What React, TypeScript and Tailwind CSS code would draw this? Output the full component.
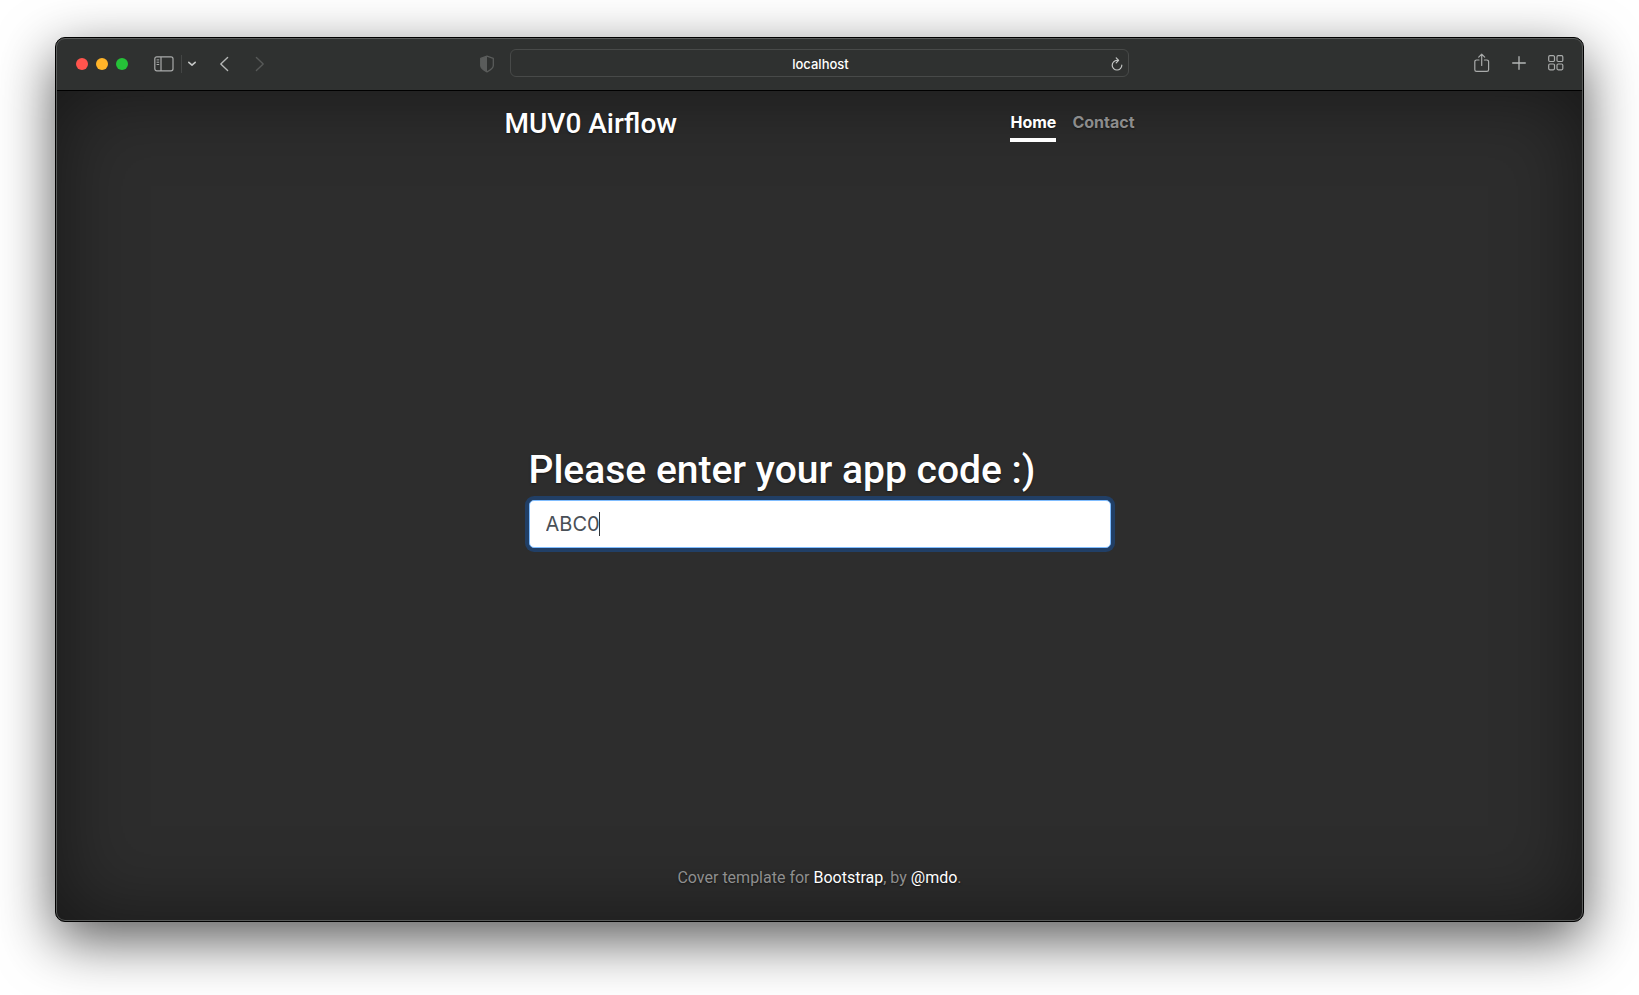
import { useState } from "react";

function SidebarIcon() {
  return (
    <svg width="20" height="16" viewBox="0 0 20 16" fill="none" stroke="#a9abaa" strokeWidth="1.2">
      <rect x="0.8" y="0.8" width="18.2" height="14" rx="2" />
      <path d="M7 1v14" />
      <path d="M2.6 3.9h2.6M2.6 6.2h2.6M2.6 8.5h2.6" strokeWidth="1" />
    </svg>
  );
}

function DownIcon() {
  return (
    <svg width="10" height="6" viewBox="0 0 10 6" fill="none" stroke="#c4c6c5" strokeWidth="1.6" strokeLinecap="round" strokeLinejoin="round">
      <path d="M1.8 1.4 5 4.2l3.2-2.8" />
    </svg>
  );
}

function BackIcon() {
  return (
    <svg width="14" height="16" viewBox="0 0 14 16" fill="none" stroke="#b4b6b5" strokeWidth="1.4" strokeLinecap="round" strokeLinejoin="round">
      <path d="M10.6 1.6 3.8 8l6.8 6.4" />
    </svg>
  );
}

function ForwardIcon() {
  return (
    <svg width="14" height="16" viewBox="0 0 14 16" fill="none" stroke="#575958" strokeWidth="1.4" strokeLinecap="round" strokeLinejoin="round">
      <path d="M3.4 1.6 10.2 8l-6.8 6.4" />
    </svg>
  );
}

function ShieldIcon() {
  return (
    <svg width="14" height="18" viewBox="0 0 14 18" fill="none">
      <path d="M7 1.2 13.3 3.4v7.2c0 2.6-2.8 4.6-6.3 6.2-3.5-1.6-6.3-3.6-6.3-6.2V3.4z" stroke="#5a5c5b" strokeWidth="1.3" strokeLinejoin="round" />
      <path d="M7 1.2V16.8C3.5 15.2.7 13.2.7 10.6V3.4z" fill="#5a5c5b" />
    </svg>
  );
}

function ReloadIcon() {
  return (
    <svg width="12" height="14" viewBox="0 0 12 14" fill="none" stroke="#c2c4c3" strokeWidth="1.2" strokeLinecap="round" strokeLinejoin="round">
      <path d="M7 3.4H6A4.8 4.8 0 1 0 10.8 8.2" />
      <path d="M5.2.9l2.4 2.5-2.4 2.4" />
    </svg>
  );
}

function ShareIcon() {
  return (
    <svg width="16" height="20" viewBox="0 0 16 20" fill="none" stroke="#a9abaa" strokeWidth="1.2" strokeLinecap="round" strokeLinejoin="round">
      <path d="M5 7H2.5A1.7 1.7 0 0 0 .8 8.7v8A1.7 1.7 0 0 0 2.5 18.4h10.4a1.7 1.7 0 0 0 1.7-1.7v-8A1.7 1.7 0 0 0 12.9 7h-2.5" />
      <path d="M7.7 12.4V1.2M4.7 4.2l3-3 3 3" />
    </svg>
  );
}

function PlusIcon() {
  return (
    <svg width="14" height="14" viewBox="0 0 14 14" stroke="#b4b6b5" strokeWidth="1.3" strokeLinecap="round">
      <path d="M7 .7v12.6M.7 7h12.6" />
    </svg>
  );
}

function GridIcon() {
  return (
    <svg width="16" height="16" viewBox="0 0 16 16" fill="none" stroke="#a9abaa" strokeWidth="1.2">
      <rect x="0.7" y="0.7" width="5.8" height="5.8" rx="1.2" />
      <rect x="9" y="0.7" width="5.8" height="5.8" rx="1.2" />
      <rect x="0.7" y="9" width="5.8" height="5.8" rx="1.2" />
      <rect x="9" y="9" width="5.8" height="5.8" rx="1.2" />
    </svg>
  );
}

function Toolbar() {
  return (
    <div className="grid h-[53px] shrink-0 grid-cols-[1fr_minmax(0,619px)_1fr] items-center border-b border-black bg-[#2f3130]">
      <div className="flex items-center pl-5">
        <div className="flex gap-2">
          <button type="button" aria-label="Close" className="size-3 rounded-full bg-[#ff544d]" />
          <button type="button" aria-label="Minimize" className="size-3 rounded-full bg-[#ffb429]" />
          <button type="button" aria-label="Zoom" className="size-3 rounded-full bg-[#25c138]" />
        </div>
        <button type="button" aria-label="Show sidebar" className="ml-[26px]"><SidebarIcon /></button>
        <div className="ml-[7px] h-[18px] w-px bg-[#444645]" />
        <button type="button" aria-label="Tab groups" className="ml-[5px]"><DownIcon /></button>
        <button type="button" aria-label="Back" className="ml-5"><BackIcon /></button>
        <button type="button" aria-label="Forward" className="ml-[22px]"><ForwardIcon /></button>
        <button type="button" aria-label="Privacy report" className="mr-4 ml-auto"><ShieldIcon /></button>
      </div>
      <div className="mb-0.5 flex h-7 items-center rounded-md border border-[#484a49] pt-0.5 pr-[5px] pl-[19px]">
        <input
          aria-label="Address"
          defaultValue="localhost"
          className="min-w-0 flex-1 bg-transparent pt-0.5 text-center text-[13px] font-medium text-white outline-none"
        />
        <button type="button" aria-label="Reload"><ReloadIcon /></button>
      </div>
      <div className="flex items-center justify-end gap-[22px] pr-[19px] pb-0.5">
        <button type="button" aria-label="Share"><ShareIcon /></button>
        <button type="button" aria-label="New tab"><PlusIcon /></button>
        <button type="button" aria-label="Tab overview"><GridIcon /></button>
      </div>
    </div>
  );
}

function CodeForm() {
  const [code, setCode] = useState("ABC0");
  return (
    <form className="mb-4" onSubmit={(e) => e.preventDefault()}>
      <h1 className="mb-1 font-['Roboto','Inter',sans-serif] text-[39px] leading-[52px] font-medium">
        <label htmlFor="code">Please enter your app code :)</label>
      </h1>
      <div className="relative">
        <input
          id="code"
          value={code}
          onChange={(e) => setCode(e.target.value)}
          className="h-12 w-full rounded-[5px] border border-[#80bdff] bg-white px-4 text-xl text-[#495057] caret-transparent ring-4 ring-[#213f66] outline-none"
        />
        <span className="pointer-events-none absolute inset-y-3 left-4 flex items-stretch text-xl leading-6">
          <span className="invisible">{code}</span>
          <span className="w-px bg-[#30353a]" />
        </span>
      </div>
    </form>
  );
}

export default function App() {
  return (
    <div className="flex min-h-screen flex-col bg-white px-[55px] pt-[37px] pb-[73px] font-['Inter','Liberation_Sans',sans-serif]">
      <div className="relative flex flex-1 flex-col overflow-hidden rounded-[10px] border border-black bg-[#2d2d2d] shadow-[0_18px_56px_rgba(0,0,0,0.65)]">
        <Toolbar />
        <div className="flex flex-1 flex-col items-center px-4 py-[15px] text-white shadow-[inset_0_0_80px_rgba(0,0,0,0.5)] [text-shadow:0_1px_2px_rgba(0,0,0,0.5)]">
          <div className="flex w-full max-w-[630px] flex-1 flex-col">
            <header className="flex items-start justify-between">
              <h3 className="font-['Roboto','Inter',sans-serif] text-[28px] leading-9 font-medium">MUV0 Airflow</h3>
              <nav className="flex gap-4 leading-6 font-bold">
                <a href="#home" aria-current="page" className="border-b-4 border-white py-1">Home</a>
                <a href="#contact" className="border-b-4 border-transparent py-1 text-[#8c8c8c]">Contact</a>
              </nav>
            </header>
            <main className="flex flex-1 flex-col justify-center px-6">
              <CodeForm />
            </main>
            <footer className="mb-4 text-center font-['Roboto','Inter',sans-serif] leading-6 text-[#8f8f8f]">
              Cover template for <a href="#bootstrap" className="text-white">Bootstrap</a>, by{" "}
              <a href="#mdo" className="text-white">@mdo</a>.
            </footer>
          </div>
        </div>
        <div className="pointer-events-none absolute inset-0 rounded-[9px] border border-[#5a5c5b]" />
      </div>
    </div>
  );
}
